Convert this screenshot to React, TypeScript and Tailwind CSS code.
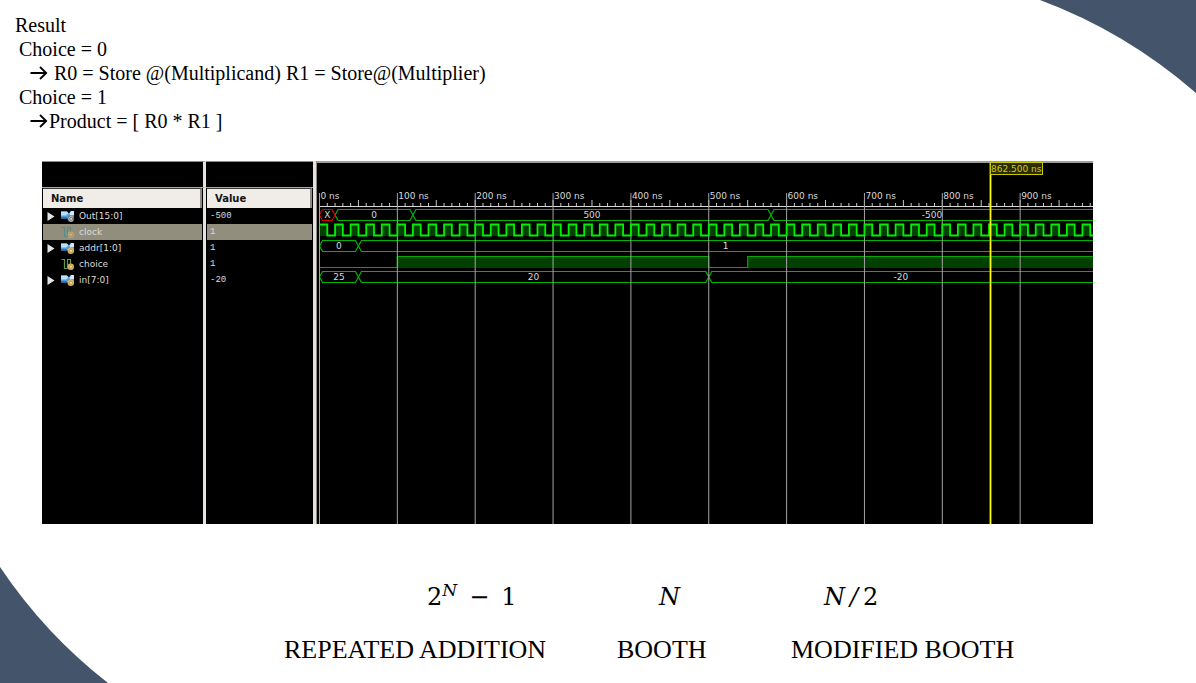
import React from "react";

type SignalKind = "output" | "bus" | "wire";
interface Signal {
  name: string;
  value: string;
  kind: SignalKind;
  selected?: boolean;
}

const signals: Signal[] = [
  { name: "Out[15:0]", value: "-500", kind: "output" },
  { name: "clock", value: "1", kind: "wire", selected: true },
  { name: "addr[1:0]", value: "1", kind: "bus" },
  { name: "choice", value: "1", kind: "wire" },
  { name: "in[7:0]", value: "-20", kind: "bus" },
];

const WIDTH = 776;
const HEIGHT = 363;
const END_NS = 994;
const xOf = (ns: number) => 2.5 + ns * 0.7785;

function Arrow() {
  return (
    <svg viewBox="0 0 18 16" className="mr-px inline-block h-4 w-[18px] align-[-1px]" aria-label="then" role="img">
      <path d="M0.5 8H16M10 2L16.2 8L10 14" fill="none" stroke="#000" strokeWidth="1.8" />
    </svg>
  );
}

function SignalIcon({ kind, selected }: { kind: SignalKind; selected?: boolean }) {
  const badge = kind === "output" ? "#6a7077" : "#d9b064";
  return (
    <svg viewBox="0 0 14 14" className="h-[14px] w-[14px] shrink-0" aria-hidden="true" opacity={selected ? 0.6 : 1}>
      {kind === "wire" ? (
        <path
          d="M0.5 2.5H3.5V11.5H6.5M6.5 11.5V2.5H9.5V8"
          fill="none"
          stroke={selected ? "#2f8c8c" : "#5f9a45"}
          strokeWidth="1.2"
        />
      ) : (
        <>
          <path d="M0 2.5H6L8 4.5L10 2H13V11H9L7 9.5H0Z" fill="#4aa3e6" />
          <path d="M0 2.5H6L7.5 4.5L5 6.5H0Z" fill="#b9e0fa" />
          <path d="M8.5 4.5L10 2H13V6L9 6.5Z" fill="#cfeafc" />
          <path d="M0 8H5L7 9.5H0Z" fill="#2478c8" />
        </>
      )}
      <circle cx="9.8" cy="9.8" r="3.2" fill={badge} />
      {kind === "output" ? (
        <path
          d="M12 8.2A2.4 2.4 0 1 0 12 11.4M8.8 9.8H11.4M10.4 8.6V11"
          fill="none"
          stroke="#e2e5e8"
          strokeWidth="0.8"
        />
      ) : (
        <path d="M8.6 9.6A1.3 1.3 0 0 1 11.2 9.6V11H8.6Z" fill="#f7e6b4" stroke="#8c7440" strokeWidth="0.5" />
      )}
    </svg>
  );
}

function SignalTable() {
  return (
    <table className="w-[271px] shrink-0 table-fixed border-separate border-spacing-0 text-left font-['DejaVu_Sans',sans-serif] text-[9px] leading-none text-[#dcdcdc]">
      <colgroup>
        <col className="w-[164px]" />
        <col className="w-[107px]" />
      </colgroup>
      <thead>
        <tr className="h-[27px]">
          <td className="border-t border-b border-r-[3px] border-t-[#8e8c8a] border-b-[#aaa6a2] border-r-[#e6e2de] p-0" />
          <td className="border-t border-b border-t-[#8e8c8a] border-b-[#aaa6a2] p-0" />
        </tr>
        <tr className="h-5 text-[10px] text-[#141414]">
          <th scope="col" className="border-r-[3px] border-[#e6e2de] p-0">
            <div className="mr-px ml-px flex h-5 items-center border-t border-r-2 border-t-[#3a3836] border-r-[#8f8b87] bg-[#f0ece8] pl-2">
              Name
            </div>
          </th>
          <th scope="col" className="p-0">
            <div className="mr-px ml-px flex h-5 items-center border-t border-r-2 border-t-[#3a3836] border-r-[#8f8b87] bg-[#f0ece8] pl-2">
              Value
            </div>
          </th>
        </tr>
      </thead>
      <tbody>
        {signals.map((s) => (
          <tr key={s.name} className="h-4">
            <td className="border-r-[3px] border-[#e6e2de] p-0">
              <div className={`mr-px ml-px flex h-4 items-center gap-1 pl-1 ${s.selected ? "bg-[#928e7d]" : ""}`}>
                <span className="flex w-[10px]">
                  {s.kind !== "wire" && (
                    <button type="button" aria-label={`Expand ${s.name}`} className="flex">
                      <svg viewBox="0 0 8 9" className="h-[9px] w-2" aria-hidden="true">
                        <path d="M0.5 0L7.5 4.5L0.5 9Z" fill="#e4e4e4" />
                      </svg>
                    </button>
                  )}
                </span>
                <SignalIcon kind={s.kind} selected={s.selected} />
                <span>{s.name}</span>
              </div>
            </td>
            <td className="p-0 font-['Liberation_Mono',monospace]">
              <div className={`mr-px ml-px flex h-4 items-center pl-[3px] ${s.selected ? "bg-[#928e7d]" : ""}`}>
                {s.value}
              </div>
            </td>
          </tr>
        ))}
        <tr className="h-[236px]">
          <td className="border-r-[3px] border-[#e6e2de] p-0" />
          <td className="p-0" />
        </tr>
      </tbody>
    </table>
  );
}

interface SegmentProps {
  from: number;
  to: number;
  top: number;
  label: string;
  color?: string;
}

function BusSegment({ from, to, top, label, color = "#00b400" }: SegmentProps) {
  const a = xOf(from);
  const open = to >= END_NS;
  const b = open ? WIDTH : xOf(to);
  const mid = top + 5.5;
  const bottom = top + 11;
  const shape = open
    ? `M${b} ${top}H${a + 3}L${a} ${mid}L${a + 3} ${bottom}H${b}`
    : `M${a} ${mid}L${a + 3} ${top}H${b - 3}L${b} ${mid}L${b - 3} ${bottom}H${a + 3}Z`;
  return (
    <g>
      <path d={shape} fill="none" stroke={color} strokeWidth="1.2" />
      <text x={(a + b) / 2} y={top + 8.5} textAnchor="middle" fill="#d8d8d8">
        {label}
      </text>
    </g>
  );
}

function clockPath() {
  let d = `M${xOf(0)} 63.5`;
  for (let t = 0; t < END_NS; t += 20) {
    d += `H${xOf(t + 10)}V74.5H${xOf(t + 20)}V63.5`;
  }
  return d;
}

function Waveform() {
  const minor = Array.from({ length: 100 }, (_, i) => i * 10);
  const major = Array.from({ length: 10 }, (_, i) => i * 100);
  const pulses = Array.from({ length: 50 }, (_, i) => i * 20);
  return (
    <svg
      viewBox={`0 0 ${WIDTH} ${HEIGHT}`}
      preserveAspectRatio="xMinYMin slice"
      className="block h-[363px] w-full min-w-0 flex-1 font-['DejaVu_Sans',sans-serif] text-[9px]"
      role="img"
      aria-label="Simulation waveform"
    >
      <rect width={WIDTH} height={HEIGHT} fill="#000" />
      <path d={`M0 1H${WIDTH}`} stroke="#a09e9c" strokeWidth="2" />

      {pulses.map((t) => (
        <rect key={t} x={xOf(t)} y="64" width="7.8" height="11" fill="#004000" />
      ))}
      <rect x={xOf(100)} y="95" width={xOf(500) - xOf(100)} height="12" fill="#004000" />
      <rect x={xOf(550)} y="95" width={WIDTH - xOf(550)} height="12" fill="#004000" />

      <BusSegment from={20} to={120} top={48.5} label="0" />
      <BusSegment from={120} to={580} top={48.5} label="500" />
      <BusSegment from={580} to={END_NS} top={48.5} label="-500" />
      <BusSegment from={0} to={20} top={48.5} label="X" color="#d00000" />
      <BusSegment from={0} to={50} top={79.5} label="0" />
      <BusSegment from={50} to={END_NS} top={79.5} label="1" />
      <path
        d={`M${xOf(0)} 106.5H${xOf(100)}V95.5H${xOf(500)}V106.5H${xOf(550)}V95.5H${WIDTH}`}
        fill="none"
        stroke="#00a800"
        strokeWidth="1.2"
      />
      <BusSegment from={0} to={50} top={110.5} label="25" />
      <BusSegment from={50} to={500} top={110.5} label="20" />
      <BusSegment from={500} to={END_NS} top={110.5} label="-20" />

      <path d={`M2 45.5H${WIDTH}`} stroke="#d8d8d8" />
      {minor.map((t) => (
        <path key={t} d={`M${xOf(t)} ${t % 50 === 0 ? 39 : 42}V45`} stroke="#c8c8c8" />
      ))}
      {major.map((t) => (
        <g key={t}>
          <path d={`M${xOf(t)} 32V${HEIGHT}`} stroke="#a4a4a4" />
          <text x={xOf(t) + 1} y="38" fill="#d8d8d8">
            {t} ns
          </text>
        </g>
      ))}
      <path d={clockPath()} fill="none" stroke="#00f000" strokeWidth="1.8" />

      <path d={`M673.5 1V${HEIGHT}`} stroke="#ffff00" strokeWidth="1.8" />
      <rect x="673.5" y="1.5" width="52" height="12" fill="#2c2c00" stroke="#c8c800" />
      <text x="674" y="10.5" fill="#d0d000">
        862.500 ns
      </text>
    </svg>
  );
}

export default function App() {
  return (
    <main className="relative min-h-screen overflow-hidden bg-white font-['Liberation_Serif',serif] text-black">
      <svg viewBox="0 0 156 93" className="absolute top-0 right-0 h-[93px] w-[156px]" aria-hidden="true">
        <path d="M0 0Q86 32 156 93V0Z" fill="#44546a" />
      </svg>
      <svg viewBox="0 0 108 116" className="absolute bottom-0 left-0 h-[116px] w-[108px]" aria-hidden="true">
        <path d="M0 0Q45 67 108 116H0Z" fill="#44546a" />
      </svg>

      <section className="relative pt-[13px] pl-[15px] text-[20px] leading-6">
        <h1>Result</h1>
        <p className="pl-1">Choice = 0</p>
        <p className="pl-[15px]">
          <Arrow /> R0 = Store @(Multiplicand) R1 = Store@(Multiplier)
        </p>
        <p className="pl-1">Choice = 1</p>
        <p className="pl-[15px]">
          <Arrow />
          Product = [ R0 * R1 ]
        </p>
      </section>

      <section className="relative mt-7 mr-[103px] ml-[42px] flex bg-black" aria-label="Simulation result">
        <SignalTable />
        <div className="w-1 shrink-0 border-r border-[#8f8b87] bg-[#e6e2de]" />
        <Waveform />
      </section>

      <section className="relative grid grid-cols-[333px_174px_auto] pt-[57px] pl-[284px]" aria-label="Cycle counts">
        <figure>
          <p className="flex gap-3 pl-[143px] font-['DejaVu_Serif',serif] text-[24px] leading-8">
            <span>
              2<sup className="top-[-9px] text-[17px] leading-none italic">N</sup>
            </span>
            <span>−</span>
            <span>1</span>
          </p>
          <figcaption className="pt-[23px] text-[26px] leading-7">REPEATED ADDITION</figcaption>
        </figure>
        <figure>
          <p className="pl-[42px] font-['DejaVu_Serif',serif] text-[24px] leading-8 italic">N</p>
          <figcaption className="pt-[23px] text-[26px] leading-7">BOOTH</figcaption>
        </figure>
        <figure>
          <p className="flex gap-[5px] pl-[33px] font-['DejaVu_Serif',serif] text-[24px] leading-8">
            <span className="italic">N</span>
            <span className="italic">/</span>
            <span>2</span>
          </p>
          <figcaption className="pt-[23px] text-[26px] leading-7">MODIFIED BOOTH</figcaption>
        </figure>
      </section>
    </main>
  );
}
